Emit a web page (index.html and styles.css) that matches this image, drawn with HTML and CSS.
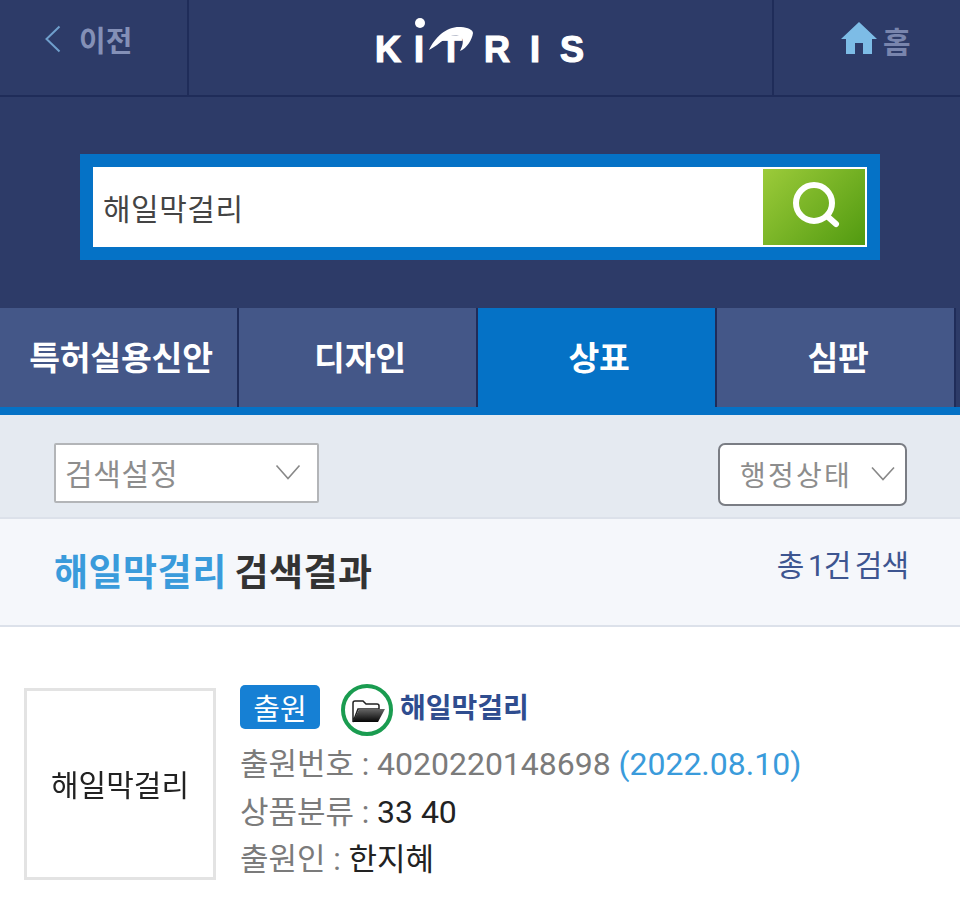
FILE: index.html
```html
<!DOCTYPE html>
<html lang="ko">
<head>
<meta charset="utf-8">
<title>KITRIS</title>
<link rel="stylesheet" href="styles.css">
</head>
<body>
<header class="topbar">
  <div class="back">
    <svg class="back-icon" width="16" height="28" viewBox="0 0 16 28"><path d="M14.500 1.500 1.500 14l13 12.500" fill="none" stroke="#6f9fcc" stroke-width="2"/></svg>
    <span>이전</span>
  </div>
  <div class="logo-cell">
    <div class="logo">
      <span>K</span><span class="l-i">I</span><span class="l-t">T</span><span class="l-r">R</span><span class="l-i2">I</span><span class="l-s">S</span>
      <svg class="logo-mark" width="110" height="50" viewBox="0 0 110 50"><circle cx="45" cy="8" r="5" fill="#fff"/><path d="M54 35C60 22 72 11 86 12c7 .5 12 3 12 6-1 7-6 15-13 18 3-6 4-11 1-14-4-3-11-2-16 2-6 4-10 8-16 11z" fill="#fff"/></svg>
    </div>
  </div>
  <div class="home">
    <svg width="38" height="34" viewBox="0 0 38 34"><path d="M19 1 37 18h-5v15H23V22h-8v11H6V18H1z" fill="#7dbce6"/></svg>
    <span>홈</span>
  </div>
</header>

<section class="search-band">
  <div class="search-box">
    <div class="search-input">해일막걸리</div>
    <div class="search-btn">
      <svg class="search-icon" width="50" height="50" viewBox="0 0 50 50"><circle cx="23" cy="22" r="18" fill="none" stroke="#fff" stroke-width="6"/><path d="m36 35 9 8" stroke="#fff" stroke-width="6" stroke-linecap="round"/></svg>
    </div>
  </div>
</section>

<nav class="tabs">
  <div class="tab">특허실용신안</div>
  <div class="tab">디자인</div>
  <div class="tab tab-active">상표</div>
  <div class="tab">심판</div>
</nav>

<section class="filters">
  <div class="select select-a"><span>검색설정</span>
    <svg width="26" height="16" viewBox="0 0 26 16"><path d="m1.500 1.500 11.500 13 11.500-13" fill="none" stroke="#888" stroke-width="1.600"/></svg>
  </div>
  <div class="select select-b"><span>행정상태</span>
    <svg width="24" height="15" viewBox="0 0 24 15"><path d="m1 1.500 11 12 11-12" fill="none" stroke="#888" stroke-width="1.600"/></svg>
  </div>
</section>

<section class="result-head">
  <h1 class="result-title"><em>해일막걸리</em> 검색결과</h1>
  <div class="result-count">총 1건 검색</div>
</section>

<article class="card">
  <div class="thumb"><span>해일막걸리</span></div>
  <div class="info">
    <div class="title-row">
      <span class="badge">출원</span>
      <span class="folder">
        <svg width="52" height="54" viewBox="0 0 52 54">
          <defs><linearGradient id="fg" x1="0" y1="0" x2="0" y2="1"><stop offset="0" stop-color="#666"/><stop offset="1" stop-color="#050505"/></linearGradient></defs>
          <circle cx="26" cy="27" r="24" fill="#fff" stroke="#1a9c50" stroke-width="4"/>
          <path d="M12 39V20q0-2 2-2h8l3 3h11q2 0 2 2v3H17z" fill="#fff" stroke="#222" stroke-width="1.500"/>
          <path d="M12 39l6-13h26l-7 13z" fill="url(#fg)"/>
        </svg>
      </span>
      <a class="name">해일막걸리</a>
    </div>
    <div class="row">출원번호 : <span class="num">4020220148698</span> <span class="num date">(2022.08.10)</span></div>
    <div class="row">상품분류 : <b class="num">33 40</b></div>
    <div class="row">출원인 : <b>한지혜</b></div>
  </div>
</article>
</body>
</html>
```
FILE: styles.css
```css
* { box-sizing: border-box; }
html, body { margin: 0; padding: 0; background: #fff; }
body {
  width: 960px;
  height: 909px;
  overflow: hidden;
  font-family: Roboto, "Noto Sans CJK KR", sans-serif;
}
.topbar {
  display: flex;
  height: 97px;
  background: #2d3b68;
  border-bottom: 2px solid #1f2c59;
}
.back {
  width: 189px;
  display: flex;
  align-items: center;
  gap: 18px;
  padding: 0 0 17px 45px;
  border-right: 2px solid #1f2c59;
  color: #8490b7;
  font-size: 29px;
  font-weight: 700;
}
.logo-cell {
  flex: 1;
  display: flex;
  justify-content: center;
}
.logo {
  position: relative;
  width: 210px;
  margin-left: -1px;
  padding-top: 27px;
  display: flex;
  align-items: flex-start;
  color: #fff;
  font-family: "Liberation Sans", sans-serif;
  font-weight: 700;
  font-size: 36px;
  line-height: 46px;
  height: 80px;
  -webkit-text-stroke: 1.2px #fff;
}
.logo span { display: block; }
.l-i { margin-left: 13px; }
.l-t { margin-left: 16px; }
.l-r { margin-left: 22px; }
.l-i2 { margin-left: 20px; }
.l-s { margin-left: 20px; }
.logo-mark { position: absolute; left: 0; top: 15px; }
.home {
  width: 188px;
  display: flex;
  align-items: center;
  padding: 0 0 19px 66px;
  border-left: 2px solid #1f2c59;
  color: #7985ad;
  font-size: 30px;
  font-weight: 700;
}
.home span { margin-left: 5px; margin-top: 3px; }
.search-band {
  height: 211px;
  padding: 57px 80px 0;
  background: #2d3b68;
}
.search-box {
  height: 106px;
  padding: 13px;
  display: flex;
  background: #0572c6;
}
.search-input {
  flex: 1;
  display: flex;
  align-items: center;
  padding-left: 10px;
  background: #fff;
  color: #444;
  font-size: 30px;
  letter-spacing: .5px;
}
.search-btn {
  width: 104px;
  display: flex;
  align-items: center;
  justify-content: center;
  background: linear-gradient(135deg, #9ccb3a, #519a10);
  border: 2px solid #fff;
  border-left: 0;
  background-clip: padding-box;
  background-color: #fff;
}
.search-icon { margin: -2px 0 0 3px; }
.tabs {
  display: flex;
  height: 107px;
  background: #2d3b68;
  border-bottom: 8px solid #0572c6;
}
.tab {
  width: 239px;
  display: flex;
  align-items: center;
  justify-content: center;
  padding: 0 0 5px 5px;
  background: #445788;
  border-right: 2px solid #1f2c59;
  color: #fff;
  font-size: 33.500px;
  font-weight: 700;
  letter-spacing: -.2px;
}
.tab-active {
  background: #0572c6;
}
.filters {
  height: 104px;
  display: flex;
  justify-content: space-between;
  padding: 28px 53px 0 54px;
  background: #e5eaf1;
  border-bottom: 2px solid #dce1ea;
}
.select {
  display: flex;
  align-items: center;
  justify-content: space-between;
  background: #fff;
  color: #8d8d8d;
  font-size: 30px;
}
.select-a {
  width: 265px;
  height: 60px;
  padding: 0 16px 2px 9px;
  border: 2px solid #b3b5b8;
  border-radius: 2px;
  letter-spacing: .7px;
}
.select-b {
  width: 189px;
  height: 63px;
  padding: 0 10px 2px 20px;
  border: 2px solid #7a7d84;
  border-radius: 7px;
  font-size: 28px;
  letter-spacing: 2.200px;
}
.result-head {
  height: 108px;
  display: flex;
  justify-content: space-between;
  padding: 0 52px 0 54px;
  background: #f5f7fb;
  border-bottom: 2px solid #dce1ea;
}
.result-title {
  margin: 0;
  padding-top: 24px;
  color: #333;
  font-size: 37px;
  font-weight: 700;
  letter-spacing: .5px;
  word-spacing: -2px;
}
.result-title em {
  font-style: normal;
  color: #3a9bdb;
}
.result-count {
  padding-top: 22px;
  color: #3d5590;
  font-size: 30px;
  letter-spacing: -1px;
  word-spacing: -2px;
}
.card {
  display: flex;
  padding: 61px 0 0 24px;
}
.thumb {
  width: 192px;
  height: 192px;
  display: flex;
  align-items: center;
  justify-content: center;
  border: 3px solid #e3e3e3;
  color: #222;
  font-size: 30px;
  padding-bottom: 2px;
}
.thumb span { filter: blur(.6px); }
.info {
  margin-left: 24px;
  margin-top: -7px;
}
.title-row {
  display: flex;
  align-items: center;
  height: 59px;
}
.badge {
  width: 80px;
  height: 44px;
  display: flex;
  align-items: center;
  justify-content: center;
  margin-top: -8px;
  background: #1680d4;
  border-radius: 5px;
  color: #fff;
  font-size: 29px;
}
.folder {
  display: flex;
  margin-left: 21px;
  margin-top: -2px;
}
.name {
  margin-left: 7px;
  margin-top: -9px;
  color: #2f4d8f;
  font-size: 28px;
  font-weight: 700;
}
.row {
  height: 48px;
  line-height: 48px;
  color: #7b7b7b;
  font-size: 31px;
  white-space: nowrap;
}
.row b {
  font-weight: 400;
  color: #222;
}
.num { font-size: 32px; }
.date { color: #3a9bdb; }
```
